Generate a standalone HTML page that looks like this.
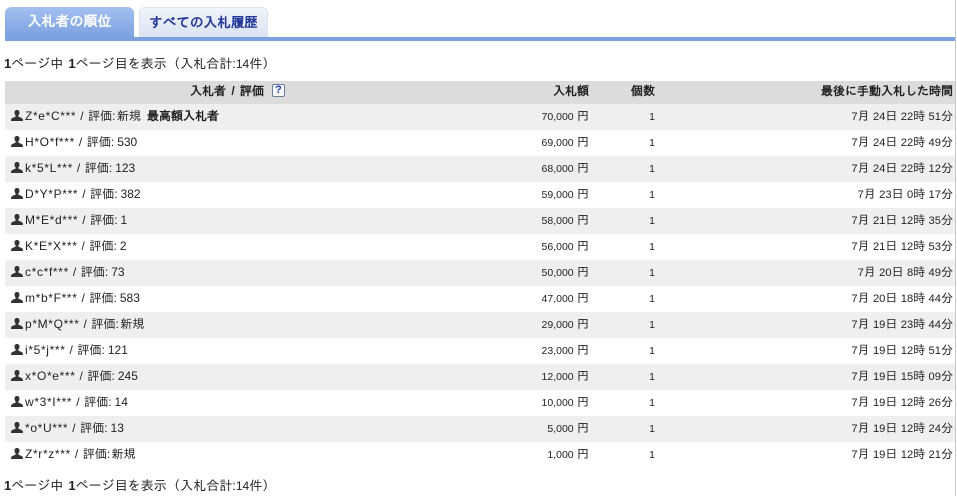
<!DOCTYPE html>
<html lang="ja"><head><meta charset="utf-8"><title>入札者の順位</title>
<style>
html,body{margin:0;padding:0;background:#fff}
body{width:957px;height:496px;overflow:hidden;position:relative;font-family:"Liberation Sans","IPAGothic","Noto Sans CJK JP",sans-serif;font-size:12px;color:#222}
.vl{position:absolute;left:955px;top:0;width:1px;height:496px;background:#c8c8c8}
.tab{position:absolute;top:7px;width:129px;height:30px;border-radius:6px 6px 0 0;box-sizing:border-box;text-align:center;font-weight:bold;line-height:29px}
.t1{left:5px;height:31px;font-size:14px;background:linear-gradient(#a3c0f1,#7ba1de);color:#fff}
.t2{left:139px;font-size:13.6px;background:linear-gradient(#f0f4fb,#dbe3f2);border:1px solid #dfe3ea;border-bottom:0;color:#23389a}
.bar{position:absolute;left:5px;top:37px;width:950px;height:4px;background:#7ba1de}
.info{position:absolute;left:4px;font-size:13px;line-height:16px;white-space:nowrap;color:#222}
.info b{font-size:13px;color:#222}
.info b+b,.info .s{margin-left:1.5px}
.info em{font-style:normal;margin-left:-3px}
.row{position:absolute;left:5px;width:950px;height:26px;line-height:24px}
.g{background:#efefef}
.head{position:absolute;left:5px;top:81px;width:950px;height:23px;line-height:20px;background:#dcdcdc;font-weight:bold;color:#222}
.n{font-size:10.5px}
.d{font-size:11.2px}
.c{position:absolute;top:0;white-space:nowrap}
.l{left:20px;letter-spacing:.65px}
.l i{font-style:normal;letter-spacing:0}
.l u{text-decoration:none;margin-left:3px;letter-spacing:0}
.l s{text-decoration:none;margin-left:1.5px;letter-spacing:0}
.l b{letter-spacing:0;margin-left:2px}
.p{right:366px}
.q{right:300px;line-height:26px;font-size:10.5px}
.r{right:2px}
.ic{position:absolute;left:6px;top:6px;width:12px;height:11px}
.help{position:absolute;left:267px;top:3px;width:11px;height:11px;border:1px solid #6b7f9f;border-radius:2px;background:#f6f8fc;color:#2340b0;font-size:11px;font-weight:bold;line-height:11px;text-align:center}
</style></head><body>
<svg width="0" height="0" style="position:absolute"><defs><symbol id="u" viewBox="0 0 12 11"><path d="M6 0C4.200 0 3.400 1.200 3.500 2.800 3.600 4.200 4.200 5.100 4.700 5.600V6.500L.9 8.300C.3 8.700 0 9.500 0 11H12C12 9.500 11.700 8.700 11.100 8.300L7.300 6.500V5.600C7.800 5.100 8.400 4.200 8.500 2.800 8.600 1.200 7.800 0 6 0Z" fill="#333"/></symbol></defs></svg>
<div class="vl"></div>
<div class="tab t1">入札者の順位</div>
<div class="tab t2">すべての入札履歴</div>
<div class="bar"></div>
<div class="info" style="top:56px"><b>1</b>ページ中 <b class="s">1</b>ページ目を表示 <em>（</em>入札合計:<span style="font-size:12px">14</span>件）</div>

<div class="head">
<span class="c" style="left:185px;word-spacing:2px">入札者 / 評価</span><span class="help">?</span>
<span class="c p">入札額</span><span class="c q" style="line-height:20px;font-size:12px">個数</span><span class="c r">最後に手動入札した時間</span>
</div>

<div class="row g" style="top:104px"><svg class="ic"><use href="#u"/></svg><span class="c l">Z*e*C*** / <i>評価:</i><s>新規</s> <b>最高額入札者</b></span><span class="c p"><span class="n">70,000</span> 円</span><span class="c q">1</span><span class="c r"><span class="d">7</span>月 <span class="d">24</span>日 <span class="d">22</span>時 <span class="d">51</span>分</span></div>
<div class="row" style="top:130px"><svg class="ic"><use href="#u"/></svg><span class="c l">H*O*f*** / <i>評価:</i><u>530</u></span><span class="c p"><span class="n">69,000</span> 円</span><span class="c q">1</span><span class="c r"><span class="d">7</span>月 <span class="d">24</span>日 <span class="d">22</span>時 <span class="d">49</span>分</span></div>
<div class="row g" style="top:156px"><svg class="ic"><use href="#u"/></svg><span class="c l">k*5*L*** / <i>評価:</i><u>123</u></span><span class="c p"><span class="n">68,000</span> 円</span><span class="c q">1</span><span class="c r"><span class="d">7</span>月 <span class="d">24</span>日 <span class="d">22</span>時 <span class="d">12</span>分</span></div>
<div class="row" style="top:182px"><svg class="ic"><use href="#u"/></svg><span class="c l">D*Y*P*** / <i>評価:</i><u>382</u></span><span class="c p"><span class="n">59,000</span> 円</span><span class="c q">1</span><span class="c r"><span class="d">7</span>月 <span class="d">23</span>日 <span class="d">0</span>時 <span class="d">17</span>分</span></div>
<div class="row g" style="top:208px"><svg class="ic"><use href="#u"/></svg><span class="c l">M*E*d*** / <i>評価:</i><u>1</u></span><span class="c p"><span class="n">58,000</span> 円</span><span class="c q">1</span><span class="c r"><span class="d">7</span>月 <span class="d">21</span>日 <span class="d">12</span>時 <span class="d">35</span>分</span></div>
<div class="row" style="top:234px"><svg class="ic"><use href="#u"/></svg><span class="c l">K*E*X*** / <i>評価:</i><u>2</u></span><span class="c p"><span class="n">56,000</span> 円</span><span class="c q">1</span><span class="c r"><span class="d">7</span>月 <span class="d">21</span>日 <span class="d">12</span>時 <span class="d">53</span>分</span></div>
<div class="row g" style="top:260px"><svg class="ic"><use href="#u"/></svg><span class="c l">c*c*f*** / <i>評価:</i><u>73</u></span><span class="c p"><span class="n">50,000</span> 円</span><span class="c q">1</span><span class="c r"><span class="d">7</span>月 <span class="d">20</span>日 <span class="d">8</span>時 <span class="d">49</span>分</span></div>
<div class="row" style="top:286px"><svg class="ic"><use href="#u"/></svg><span class="c l">m*b*F*** / <i>評価:</i><u>583</u></span><span class="c p"><span class="n">47,000</span> 円</span><span class="c q">1</span><span class="c r"><span class="d">7</span>月 <span class="d">20</span>日 <span class="d">18</span>時 <span class="d">44</span>分</span></div>
<div class="row g" style="top:312px"><svg class="ic"><use href="#u"/></svg><span class="c l">p*M*Q*** / <i>評価:</i><s>新規</s></span><span class="c p"><span class="n">29,000</span> 円</span><span class="c q">1</span><span class="c r"><span class="d">7</span>月 <span class="d">19</span>日 <span class="d">23</span>時 <span class="d">44</span>分</span></div>
<div class="row" style="top:338px"><svg class="ic"><use href="#u"/></svg><span class="c l">i*5*j*** / <i>評価:</i><u>121</u></span><span class="c p"><span class="n">23,000</span> 円</span><span class="c q">1</span><span class="c r"><span class="d">7</span>月 <span class="d">19</span>日 <span class="d">12</span>時 <span class="d">51</span>分</span></div>
<div class="row g" style="top:364px"><svg class="ic"><use href="#u"/></svg><span class="c l">x*O*e*** / <i>評価:</i><u>245</u></span><span class="c p"><span class="n">12,000</span> 円</span><span class="c q">1</span><span class="c r"><span class="d">7</span>月 <span class="d">19</span>日 <span class="d">15</span>時 <span class="d">09</span>分</span></div>
<div class="row" style="top:390px"><svg class="ic"><use href="#u"/></svg><span class="c l">w*3*I*** / <i>評価:</i><u>14</u></span><span class="c p"><span class="n">10,000</span> 円</span><span class="c q">1</span><span class="c r"><span class="d">7</span>月 <span class="d">19</span>日 <span class="d">12</span>時 <span class="d">26</span>分</span></div>
<div class="row g" style="top:416px"><svg class="ic"><use href="#u"/></svg><span class="c l">*o*U*** / <i>評価:</i><u>13</u></span><span class="c p"><span class="n">5,000</span> 円</span><span class="c q">1</span><span class="c r"><span class="d">7</span>月 <span class="d">19</span>日 <span class="d">12</span>時 <span class="d">24</span>分</span></div>
<div class="row" style="top:442px"><svg class="ic"><use href="#u"/></svg><span class="c l">Z*r*z*** / <i>評価:</i><s>新規</s></span><span class="c p"><span class="n">1,000</span> 円</span><span class="c q">1</span><span class="c r"><span class="d">7</span>月 <span class="d">19</span>日 <span class="d">12</span>時 <span class="d">21</span>分</span></div>

<div class="info" style="top:478px"><b>1</b>ページ中 <b class="s">1</b>ページ目を表示 <em>（</em>入札合計:<span style="font-size:12px">14</span>件）</div>
</body></html>
